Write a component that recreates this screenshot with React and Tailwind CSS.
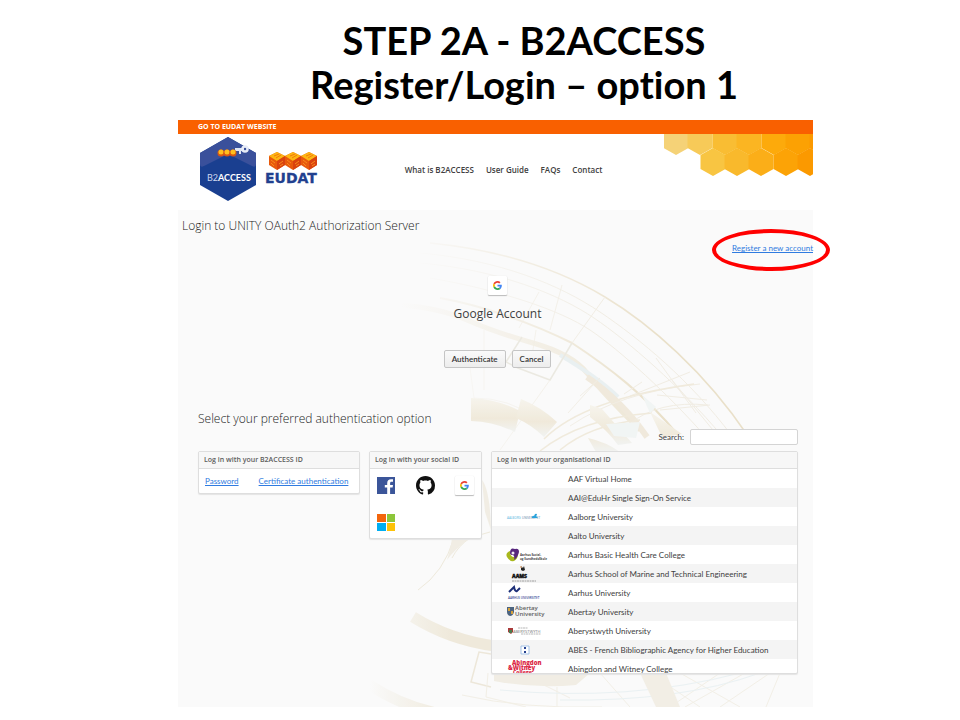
import React from "react";

const rows = [
  ["AAF Virtual Home", null],
  ["AAI@EduHr Single Sign-On Service", null],
  ["Aalborg University", "aalborg"],
  ["Aalto University", null],
  ["Aarhus Basic Health Care College", "health"],
  ["Aarhus School of Marine and Technical Engineering", "aams"],
  ["Aarhus University", "aarhus"],
  ["Abertay University", "abertay"],
  ["Aberystwyth University", "aber"],
  ["ABES - French Bibliographic Agency for Higher Education", "abes"],
  ["Abingdon and Witney College", "abingdon"],
];

function OrgLogo({ kind }) {
  return (
    <svg viewBox="0 0 38 19" className="block h-[19px] w-[38px] overflow-visible font-['Open_Sans',sans-serif]" aria-hidden="true">
      {kind === "aalborg" && (
        <g>
          <text x="1" y="12" fontSize="3" fill="#4fb4e0">AALBORG</text>
          <text x="16" y="12" fontSize="3" fill="#5a86a8">UNIVERSITET</text>
          <path d="M26 10q1-2 2-1l1-2q2-1 2 1l-1 1 2 2h-6z" fill="#2aa3dc" />
        </g>
      )}
      {kind === "health" && (
        <g>
          <path d="M4 6q-5 2-3 6 3 5 7 4 4-2 4-7l-4 3q-4 0-4-6z" fill="#a9b81e" />
          <path d="M4 8Q4 2 9 4q4-1 4 3-1 5-5 8 1-4-1-5-3 0-3-2z" fill="#57267d" />
          <circle cx="7" cy="8" r="1.500" fill="#efe9f5" />
          <text x="14" y="11" fontSize="3" fontWeight="700" fill="#444">Aarhus Social-</text>
          <text x="14" y="15" fontSize="3" fontWeight="700" fill="#444">og SundhedsSkole</text>
        </g>
      )}
      {kind === "aams" && (
        <g>
          <path d="M15 2l2 2 1-2 1 4-2 1-2-1z" fill="#222" />
          <circle cx="15" cy="3" r="1" fill="#d8a880" />
          <text x="6" y="14" fontSize="5" fontWeight="800" fill="#111" stroke="#111" strokeWidth=".4">AAMS</text>
          <path d="M6 17h24" stroke="#888" strokeWidth=".8" strokeDasharray="2 .5" />
        </g>
      )}
      {kind === "aarhus" && (
        <g>
          <path d="M3 9l5-5q1 5 3 4l3-3" fill="none" stroke="#1d2f78" strokeWidth="2" />
          <text x="2" y="16" fontSize="3" fontWeight="600" fill="#3a4d96">AARHUS UNIVERSITET</text>
        </g>
      )}
      {kind === "abertay" && (
        <g>
          <path d="M1 5h7v5q-1 4-4 4-3-1-3-4z" fill="#4d6480" />
          <path d="M2 6h2v3H2zM5 9h2v3H5z" fill="#d6a13a" />
          <text x="9" y="8" fontSize="6" fontWeight="600" fill="#606060">Abertay</text>
          <text x="9" y="14" fontSize="6" fontWeight="600" fill="#606060">University</text>
        </g>
      )}
      {kind === "aber" && (
        <g>
          <path d="M2 7h5v4l-2 2-3-2z" fill="#a93a3a" />
          <path d="M3 9h3v3H3z" fill="#4a7b4d" />
          <path d="M12 7h10M15 13h20" stroke="#999" strokeWidth=".7" strokeDasharray="2 .5" />
          <text x="7" y="12" fontSize="4" fill="#777">ABERYSTWYTH</text>
        </g>
      )}
      {kind === "abes" && (
        <g>
          <path d="M15 6h8v8h-8z" fill="#fff" stroke="#8fb6e3" strokeWidth=".8" />
          <path d="M18 7h2v2h-2zM18 11h2v2h-2z" fill="#24408e" />
        </g>
      )}
      {kind === "abingdon" && (
        <g fill="#dc2746" fontWeight="800">
          <text x="6" y="6" fontSize="6">Abingdon</text>
          <text x="2" y="11" fontSize="6">&amp;Witney</text>
          <text x="7" y="15" fontSize="5">College</text>
        </g>
      )}
    </svg>
  );
}

function GoogleIcon() {
  return (
    <span className="flex h-[19px] w-[19px] items-center justify-center rounded-[1px] bg-white shadow-[0_1px_1px_#bbbbbb,0_0_1px_#dddddd]">
      <svg viewBox="0 0 48 48" className="h-[9px] w-[9px]" aria-hidden="true">
        <path fill="#EA4335" d="M24 9.500c3.540 0 6.710 1.220 9.210 3.600l6.850-6.850C35.900 2.380 30.470 0 24 0 14.620 0 6.510 5.380 2.560 13.220l7.980 6.190C12.430 13.720 17.740 9.500 24 9.500z" />
        <path fill="#4285F4" d="M46.980 24.550c0-1.570-.15-3.090-.38-4.550H24v9.020h12.940c-.58 2.960-2.260 5.480-4.780 7.180l7.730 6c4.510-4.180 7.090-10.360 7.090-17.650z" />
        <path fill="#FBBC05" d="M10.530 28.590c-.48-1.450-.76-2.990-.76-4.590s.27-3.140.76-4.590l-7.980-6.190C.92 16.460 0 20.120 0 24c0 3.880.92 7.540 2.560 10.780l7.970-6.190z" />
        <path fill="#34A853" d="M24 48c6.480 0 11.930-2.130 15.890-5.810l-7.730-6c-2.150 1.450-4.920 2.300-8.160 2.300-6.260 0-11.570-4.220-13.470-9.910l-7.980 6.190C6.510 42.620 14.620 48 24 48z" />
      </svg>
    </span>
  );
}

function B2Logo() {
  return (
    <svg viewBox="0 0 58 66" className="h-[66px] w-[58px]" role="img" aria-label="B2ACCESS">
      <path d="M29 0l28 16v32L29 64 1 48V16z" fill="#1a3f90" />
      <path d="M29 0l28 16v11q0 4-4 2L29 17 5 29q-4 2-4-2V16z" fill="#3a509b" />
      <path d="M36 11h9v3h-3v3h-2v-3h-4z" fill="#dfe5f3" />
      <circle cx="46" cy="12" r="2.500" fill="none" stroke="#e8ecf7" strokeWidth="2.500" />
      {[22, 28, 34].map((x) => (
        <g key={x}>
          <circle cx={x} cy="16" r="3.500" fill="#d95613" />
          <circle cx={x} cy="15" r="2.500" fill="#ffc01e" />
        </g>
      ))}
      <text x="8" y="44" fontSize="9" fill="#cdd7ef" fontFamily="Lato, sans-serif">
        B2<tspan fontWeight="700" fill="#fff">ACCESS</tspan>
      </text>
    </svg>
  );
}

function EudatLogo() {
  return (
    <svg viewBox="0 0 56 36" className="h-9 w-14 overflow-visible" role="img" aria-label="EUDAT">
      {[4, 20, 36].map((x) => (
        <g key={x} transform={`translate(${x} 0)`}>
          <path d="M8 1l8 4v9l-8 5-8-5V5z" fill="#e8590c" />
          <path d="M8 1l8 4-8 5-8-5z" fill="#fdb614" />
          <path d="M8 10l8-5v9l-8 5z" fill="#d9420f" />
          <path d="M2 9l4 3M2 12l3 3M10 13l4-3M11 15l3-2" stroke="#f98a1b" />
          <path d="M5 5l5-2M7 7l5-3" stroke="#f27a0c" />
        </g>
      ))}
      <text x="0" y="32" fontSize="14" fontWeight="700" fill="#21408f" stroke="#21408f" strokeWidth=".3" fontFamily="DejaVu Sans, sans-serif">EUDAT</text>
    </svg>
  );
}

function Honeycomb() {
  const cells = [
    [12, 0, "#f5d277"], [36, 0, "#f7ca58"], [61, 0, "#f9bd33"], [85, 0, "#fbb522"], [110, 0, "#fdaa0b"], [134, 0, "#fca103"], [158, 0, "#fb9900"],
    [49, 21, "#f8c542"], [73, 21, "#f9b92c"], [97, 21, "#fbae18"], [122, 21, "#fca306"], [146, 21, "#fb9900"],
  ];
  return (
    <svg viewBox="0 0 149 43" className="block h-[43px] w-[149px]" aria-hidden="true">
      {cells.map(([x, y, fill]) => (
        <path key={`${x}-${y}`} d={`M${x} ${y - 7}l12.500 7v14l-12.500 7-12.500-7v-14z`} fill={fill} />
      ))}
    </svg>
  );
}

function Backdrop() {
  return (
    <svg viewBox="178 210 635 497" preserveAspectRatio="xMidYMid slice" className="absolute inset-0 h-full w-full opacity-80" aria-hidden="true">
      <defs>
        <linearGradient id="fade" gradientUnits="userSpaceOnUse" x1="400" y1="0" x2="660" y2="0">
          <stop offset="0" stopColor="#eadfc6" stopOpacity="0" />
          <stop offset="1" stopColor="#e6dabd" />
        </linearGradient>
        <linearGradient id="faint" gradientUnits="userSpaceOnUse" x1="410" y1="0" x2="600" y2="0">
          <stop offset="0" stopColor="#f1ede3" stopOpacity="0" />
          <stop offset="1" stopColor="#efeade" />
        </linearGradient>
        <linearGradient id="band" gradientUnits="userSpaceOnUse" x1="370" y1="0" x2="450" y2="0">
          <stop offset="0" stopColor="#ede6d4" stopOpacity="0" />
          <stop offset="1" stopColor="#ede6d4" />
        </linearGradient>
        <linearGradient id="patch" x1="0" y1="0" x2="0" y2="1">
          <stop offset="0" stopColor="#f6f3ea" />
          <stop offset=".6" stopColor="#eee6d3" />
          <stop offset="1" stopColor="#f0f2f0" />
        </linearGradient>
      </defs>
      <g fill="none" stroke="url(#faint)">
        <path d="M430 243C500 250 560 270 605 297S705 372 748 436" stroke="url(#fade)" strokeWidth="1.500" />
        <path d="M420 253C500 260 560 285 600 312S690 380 732 436" />
        <path d="M420 263C500 270 560 295 594 318S680 386 722 436" />
        <path d="M430 278C500 290 560 310 590 330S670 396 705 436" />
        <path d="M400 305Q440 308 467 320T533 343T587 373T640 430" stroke="url(#fade)" strokeWidth="5" opacity=".8" />
        <path d="M440 298C480 305 530 322 572 343C610 368 645 395 678 435" stroke="url(#fade)" strokeWidth="2" />
        <path d="M560 355q40 24 58 42" stroke="#e6eef0" strokeWidth="4" />
        <path d="M587 377q35 24 60 60" stroke="#eee6d5" strokeWidth="6" />
        <path d="M572 343l-22 37-32-12-12-6 16-25" stroke="#e8e6dc" strokeWidth="1.500" />
        <path d="M605 297l-33 46M550 380l-50 70M539 292l-20 36M562 285l-12 45M536 330l-4 26M470 368l4 30q35 0 62 20M484 330v60M593 385l-25 28M600 378l-20 18M642 382l-18 12M656 358l40 55M672 380l45 55M690 372l-60 24M700 384q-80 8-130 42M708 405q-50-5-80 20M657 395l50 5M660 410l50-5" />
        <path d="M694 384q-110 15-150 55M652 413q-70 5-112 38M640 420q-50 5-80 30" stroke="#eee7d5" strokeWidth="1.500" />
      </g>
      <g fill="url(#patch)">
        <path d="M471 398q26 1 49 13l-5 21q-20-10-44-11z" />
        <path d="M521 399q20 8 36 23l-13 15q-12-12-28-19z" />
        <path d="M590 405l12 4q14 16 30 34l-14 2q-10-14-28-28z" />
        <path d="M588 438q18 4 32 14h-24zM650 412l32 22-20 3z" />
      </g>
      <path d="M606 424l34-2-4 16-22-2zM642 395l14 12-6 6z" fill="#f0f4f3" />
      <g fill="none">
        <path d="M413 617Q450 640 495 646" stroke="url(#band)" strokeWidth="11" />
        <path d="M368 684Q400 705 436 713" stroke="url(#band)" strokeWidth="11" />
        <path d="M418 590Q444 572 454 538M452 558q6-12 18-20M490 532l-28 8" stroke="#ece6d5" />
        <path d="M491 654l-12-2-8 30 20 5" stroke="#eae3d2" strokeWidth="1.500" />
        <path d="M462 695q60 14 140 12M557 687v20M488 673l-2 24 40 10M520 673l50 25M600 673l30 34M650 673l50 34M680 673l60 34M720 673l-50 34M745 673l-60 34M770 673l-50 34M780 673l-14 34" stroke="#f1ede2" />
        <path d="M500 690q130 12 240-17M560 700q120 2 200-27" stroke="#e7f0f2" />
      </g>
      <path d="M494 673h96l-14 12q-40 4-82-4z" fill="#efebdf" />
      <path d="M640 673h26l14 34h-24z" fill="#f1ece1" />
      <path d="M452 538h18q-16 12-23 22 4-12 5-22z" fill="#efebdf" />
      <path d="M482 480q8 10 9 50l-6-18z" fill="#efebdf" />
    </svg>
  );
}

const panel = "rounded-[2px] border border-[#dedede] bg-white shadow-[0_1px_1px_#e4e4e4]";
const panelHead = "flex h-[17px] items-center border-b border-[#dedede] bg-[#f7f7f7] px-[5px] font-['Open_Sans',sans-serif] text-[7px] font-semibold text-[#5c5c5c]";
const small = "font-['Lato',sans-serif] text-[8px] leading-[12px]";
const link = "text-[#2f7be0] underline";
const button = "h-[18px] rounded-[2px] border border-[#c5c5c5] bg-linear-to-b from-[#fafafa] to-[#ededed] px-[7px] font-['Lato',sans-serif] text-[8px] leading-[16px] font-semibold text-[#333333]";

export default function App() {
  return (
    <div className="min-h-screen bg-white pr-[147px] pb-[13px] pl-[178px] font-['Open_Sans',sans-serif] text-[#404040]">
      <h1 className="-mr-[57px] flex h-[120px] flex-col items-center pt-[18px] font-['Lato',sans-serif] text-[38px] leading-[44px] font-bold whitespace-nowrap text-black [font-variant-ligatures:none]">
        <span>STEP 2A - B2ACCESS</span>
        <span>Register/Login – option 1</span>
      </h1>

      <main>
        <div className="flex h-[14px] items-center bg-[#f96000] px-5">
          <a href="#eudat" className="text-[7px] leading-[12px] font-bold text-white">GO TO EUDAT WEBSITE</a>
        </div>
        <header className="flex h-[76px] items-start justify-between bg-white">
          <div className="flex items-start pt-[3px] pl-[21px]">
            <B2Logo />
            <div className="pt-[14px] pl-2"><EudatLogo /></div>
          </div>
          <nav className="flex gap-3 pt-[30px] pl-[22px] text-[8px] leading-[12px] font-semibold">
            <a href="#what">What is B2ACCESS</a>
            <a href="#guide">User Guide</a>
            <a href="#faqs">FAQs</a>
            <a href="#contact">Contact</a>
          </nav>
          <Honeycomb />
        </header>

        <section className="relative bg-[#fafafa]">
          <Backdrop />
          <div className="relative">
            <h2 className="pt-[6px] pl-1 text-[12px] leading-[20px] font-light text-[#222222]">Login to UNITY OAuth2 Authorization Server</h2>
            <div className={`mt-[6px] flex justify-end ${small}`}>
              <div className="relative">
                <a href="#register" className={link}>Register a new account</a>
                <span className="pointer-events-none absolute -top-[13px] -right-[17px] h-[42px] w-[118px] rounded-[50%] border-4 border-[#ff0000]" />
              </div>
            </div>

            <div className="flex flex-col items-center pt-[22px] pl-1">
              <GoogleIcon />
              <p className="pt-[9px] text-[12px] leading-[20px]">Google Account</p>
              <div className="flex gap-[6px] pt-[26px]">
                <button type="button" className={button}>Authenticate</button>
                <button type="button" className={button}>Cancel</button>
              </div>
            </div>

            <div className="pt-[41px] pr-[15px] pb-[33px] pl-5">
              <h2 className="text-[12px] leading-[20px] font-light text-[#222222]">Select your preferred authentication option</h2>
              <div className={`flex items-center justify-end gap-[6px] ${small}`}>
                <label htmlFor="search">Search:</label>
                <input id="search" className="h-4 w-[108px] rounded-[2px] border border-[#d4d4d4] bg-white px-1 outline-none" />
              </div>

              <div className={`mt-[6px] flex items-start gap-[9px] ${small}`}>
                <div className={`${panel} w-[162px]`}>
                  <h3 className={panelHead}>Log in with your B2ACCESS ID</h3>
                  <div className="flex h-[24px] items-center gap-5 px-[6px] whitespace-nowrap">
                    <a href="#password" className={link}>Password</a>
                    <a href="#certificate" className={link}>Certificate authentication</a>
                  </div>
                </div>
                <div className={`${panel} w-[113px]`}>
                  <h3 className={panelHead}>Log in with your social ID</h3>
                  <div className="grid h-[69px] grid-cols-[39px_39px_1fr] grid-rows-[37px_1fr] items-start pt-[7px] pl-[7px]">
                    <a href="#facebook" aria-label="Facebook">
                      <svg viewBox="0 0 19 19" className="h-[19px] w-[19px]" aria-hidden="true">
                        <path d="M0 1h18v17H0z" fill="#3b5599" />
                        <path d="M10.200 18v-6.500H7.800V9h2.400V7.200c0-2.700 1.500-4 3.800-4l2 .1v2.500h-1.400c-1.200 0-1.500.6-1.500 1.500V9H16l-.4 2.500h-2.500V18z" fill="#fff" />
                      </svg>
                    </a>
                    <a href="#github" aria-label="GitHub">
                      <svg viewBox="0 0 16 16" className="h-[19px] w-[19px]" aria-hidden="true">
                        <path fill="#111" d="M8 0C3.580 0 0 3.580 0 8c0 3.540 2.290 6.530 5.470 7.590.4.070.55-.17.55-.38 0-.19-.01-.82-.01-1.490-2.010.37-2.530-.49-2.690-.94-.09-.23-.48-.94-.82-1.130-.28-.15-.68-.52-.01-.53.63-.01 1.080.58 1.230.82.72 1.210 1.870.87 2.330.66.07-.52.28-.87.51-1.070-1.780-.2-3.640-.89-3.640-3.950 0-.87.31-1.590.82-2.150-.08-.2-.36-1.020.08-2.120 0 0 .67-.21 2.200.82.64-.18 1.320-.27 2-.27s1.360.09 2 .27c1.530-1.040 2.200-.82 2.200-.82.44 1.100.16 1.920.08 2.120.51.56.82 1.270.82 2.150 0 3.070-1.870 3.750-3.650 3.950.29.25.54.73.54 1.480 0 1.070-.01 1.930-.01 2.200 0 .21.15.46.55.38A8.010 8.010 0 0016 8c0-4.420-3.580-8-8-8z" />
                      </svg>
                    </a>
                    <a href="#google" aria-label="Google"><GoogleIcon /></a>
                    <a href="#microsoft" aria-label="Microsoft">
                      <svg viewBox="0 0 19 19" className="h-[19px] w-[19px]" aria-hidden="true">
                        <path d="M0 1h9v8H0z" fill="#f3650c" />
                        <path d="M10 1h8v8h-8z" fill="#8cc63a" />
                        <path d="M0 10h9v8H0z" fill="#00aef2" />
                        <path d="M10 10h8v8h-8z" fill="#fdc208" />
                      </svg>
                    </a>
                  </div>
                </div>
                <div className={`${panel} min-w-0 flex-1`}>
                  <h3 className={panelHead}>Log in with your organisational ID</h3>
                  <div className="h-[204px] overflow-hidden">
                    <table className="w-full border-collapse">
                      <tbody>
                        {rows.map(([name, logo]) => (
                          <tr key={name} className="h-[19px] even:bg-[#f4f4f4]">
                            <td className="w-[76px] p-0 pl-[14px]">{logo && <OrgLogo kind={logo} />}</td>
                            <td className="p-0">{name}</td>
                          </tr>
                        ))}
                      </tbody>
                    </table>
                  </div>
                </div>
              </div>
            </div>
          </div>
        </section>
      </main>
    </div>
  );
}
